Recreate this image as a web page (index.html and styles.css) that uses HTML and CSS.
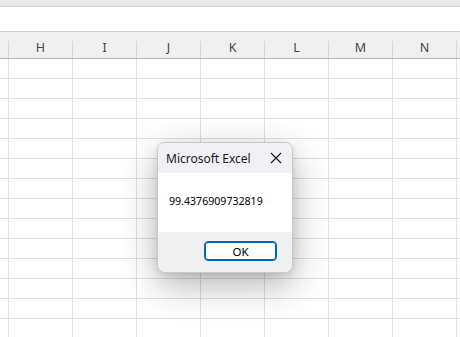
FILE: index.html
```html
<!DOCTYPE html>
<html>
<head>
<meta charset="utf-8">
<link rel="stylesheet" href="styles.css">
</head>
<body>
<div class="app">
  <div class="topband"></div>
  <div class="formula"></div>
  <div class="colheads">
    <div class="hcell stub"></div>
    <div class="hcell">H</div>
    <div class="hcell">I</div>
    <div class="hcell">J</div>
    <div class="hcell">K</div>
    <div class="hcell">L</div>
    <div class="hcell">M</div>
    <div class="hcell">N</div>
    <div class="hcell"></div>
  </div>
  <div class="sheet" id="sheet"></div>
  <div class="dialog">
    <div class="dtitle">
      <span class="dname">Microsoft Excel</span>
      <svg class="close" width="12" height="12" viewBox="0 0 12 12"><path d="M1 1L11 11M11 1L1 11" stroke="#1a1a1a" stroke-width="1.1" fill="none"/></svg>
    </div>
    <div class="dbody">99.4376909732819</div>
    <div class="dfoot"><button class="okbtn">OK</button></div>
  </div>
</div>
<script>
  var s = document.getElementById('sheet');
  var html = '';
  for (var r = 0; r < 14; r++) {
    html += '<div class="row"><div class="cell stub"></div>';
    for (var c = 0; c < 8; c++) html += '<div class="cell"></div>';
    html += '</div>';
  }
  s.innerHTML = html;
</script>
</body>
</html>
```
FILE: styles.css
```css
html, body { margin: 0; padding: 0; }
body {
  width: 460px; height: 337px; overflow: hidden; background: #fff;
  font-family: "Segoe UI", "Noto Sans", "Open Sans", sans-serif;
}
.app { position: relative; width: 460px; height: 337px; overflow: hidden; }
.topband {
  height: 6px;
  background: linear-gradient(#ececec, #e4e4e4);
  border-bottom: 1px solid #d2d2d2;
}
.formula { height: 24px; background: #fff; border-bottom: 1px solid #cfcfcf; }
.colheads {
  display: flex; align-items: flex-end;
  height: 26px; background: #f0f0f0;
  border-bottom: 1px solid #b8b8b8;
}
.hcell {
  flex: none; width: 64px; height: 17px;
  border-right: 1px solid #d6d6d6;
  display: flex; justify-content: center; align-items: center;
  font-size: 12.5px; color: #444; line-height: 1;
  padding-bottom: 2px; box-sizing: border-box;
}
.hcell.stub { width: 9px; }
.sheet { display: flex; flex-direction: column; }
.row { display: flex; flex: none; }
.cell {
  flex: none; width: 63px; height: 19px;
  border-right: 1px solid #e0e0e0;
  border-bottom: 1px solid #e0e0e0;
}
.cell.stub { width: 8px; }
.dialog {
  position: absolute; left: 157px; top: 142px;
  width: 136px; height: 131px; box-sizing: border-box;
  border: 1px solid #c9c9c9; border-radius: 8px;
  background: #f0f0f0; overflow: hidden;
  display: flex; flex-direction: column;
  box-shadow: 0 12px 36px rgba(0,0,0,0.30), 0 2px 6px rgba(0,0,0,0.10);
}
.dtitle {
  height: 30px; flex: none; background: #f0f0f5;
  display: flex; align-items: center; justify-content: space-between;
  padding: 0 10px 0 8px;
}
.dname { font-size: 12px; color: #1a1a1a; }
.close { display: block; }
.dbody {
  height: 59px; flex: none; background: #fff;
  display: flex; align-items: center;
  padding-left: 11px; padding-bottom: 3px; box-sizing: border-box;
  font-size: 10.6px; color: #000;
}
.dfoot {
  flex: 1; background: #f0f0f0;
  display: flex; justify-content: flex-end; align-items: flex-start;
  padding: 9px 15px 0 0;
}
.okbtn {
  width: 73px; height: 20px; box-sizing: border-box;
  border: 1px solid #0067c0; box-shadow: inset 0 0 0 1px #0067c0;
  border-radius: 4px; background: #fdfdfd;
  font-family: inherit; font-size: 11.5px; color: #000; padding: 0;
}
```
